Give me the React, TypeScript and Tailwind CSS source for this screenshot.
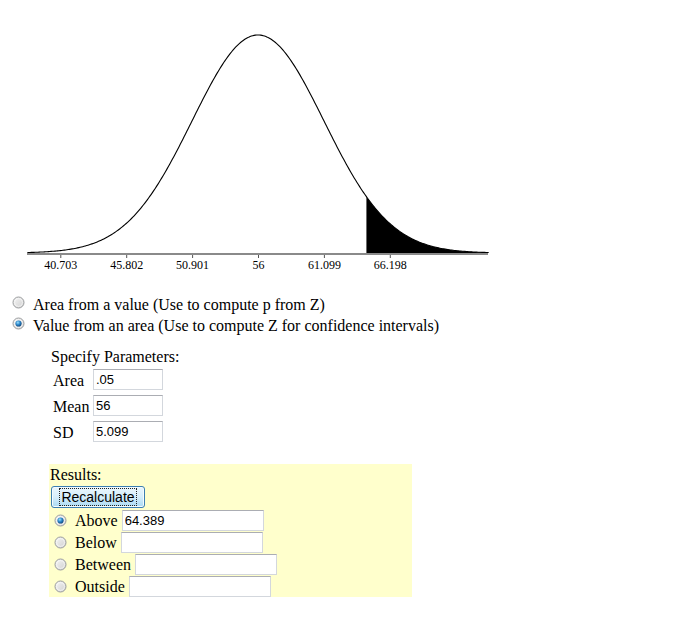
import { useId } from "react";

const MEAN = 56;
const SD = 5.099;
const CX = 258; // x of the mean
const PX = 65.9; // pixels per SD
const BASE = 253;
const PEAK = 218;
const CUTOFF = 64.389;

const xAt = (z: number) => CX + z * PX;
const yAt = (z: number) => BASE - PEAK * Math.exp((-z * z) / 2);

function curvePath(from: number, to: number) {
  const pts: string[] = [];
  for (let z = from; z <= to + 1e-9; z += 0.02) {
    pts.push(`${xAt(z).toFixed(2)},${yAt(z).toFixed(2)}`);
  }
  return pts;
}

function NormalChart() {
  const zc = (CUTOFF - MEAN) / SD;
  const line = curvePath(-3.5, 3.5);
  const tail = curvePath(zc, 3.5);
  const shade = `M${xAt(zc)},${BASE} L${tail.join(" L")} L${xAt(3.5)},${BASE} Z`;
  const ticks = [-3, -2, -1, 0, 1, 2];

  return (
    <svg width={674} height={295} className="block">
      <rect x={27} y={253} width={461} height={2} fill="#8a8a8a" />
      {ticks.map((k) => (
        <line
          key={k}
          x1={xAt(k) + 0.5}
          x2={xAt(k) + 0.5}
          y1={255}
          y2={258}
          stroke="#555"
          strokeWidth={1}
        />
      ))}
      <path d={shade} fill="#000" />
      <polyline points={line.join(" ")} fill="none" stroke="#000" strokeWidth={1.1} />
      {ticks.map((k) => (
        <text
          key={k}
          x={xAt(k) + 0.5}
          y={269}
          textAnchor="middle"
          fontFamily="'Liberation Serif', serif"
          fontSize={12}
          fill="#000"
        >
          {k === 0 ? "56" : (MEAN + k * SD).toFixed(3)}
        </text>
      ))}
    </svg>
  );
}

function Radio({ checked = false }: { checked?: boolean }) {
  const id = useId().replace(/:/g, "");
  return (
    <svg width={13} height={13} viewBox="0 0 13 13" className="block shrink-0">
      <defs>
        <linearGradient id={`ring${id}`} x1="0" y1="0" x2="1" y2="1">
          <stop offset="0" stopColor="#f6f6f6" />
          <stop offset="1" stopColor="#cfcfcf" />
        </linearGradient>
        <radialGradient id={`dot${id}`} cx="0.4" cy="0.35" r="0.7">
          <stop offset="0" stopColor="#9be0ff" />
          <stop offset="0.5" stopColor="#2b86c9" />
          <stop offset="1" stopColor="#0c3f74" />
        </radialGradient>
      </defs>
      <circle cx={6.5} cy={6.5} r={5.5} fill={`url(#ring${id})`} stroke="#9a9c9e" strokeWidth={1} />
      <circle cx={6.5} cy={6.5} r={4} fill="none" stroke="#ffffff" strokeOpacity={0.7} strokeWidth={0.8} />
      {checked && <circle cx={6.5} cy={6.5} r={3.1} fill={`url(#dot${id})`} />}
    </svg>
  );
}

function Field({ value = "", w }: { value?: string; w: string }) {
  return (
    <input
      readOnly
      value={value}
      className={`${w} h-[21px] shrink-0 border border-[#d3d7dd] border-t-[#abadb3] bg-white px-[2px] font-['Liberation_Sans',Arial,sans-serif] text-[13px] text-black outline-none`}
    />
  );
}

const modes = [
  { label: "Area from a value (Use to compute p from Z)", checked: false },
  { label: "Value from an area (Use to compute Z for confidence intervals)", checked: true },
];

const params = [
  { label: "Area", value: ".05" },
  { label: "Mean", value: "56" },
  { label: "SD", value: "5.099" },
];

const results = [
  { label: "Above", value: "64.389", checked: true },
  { label: "Below", value: "", checked: false },
  { label: "Between", value: "", checked: false },
  { label: "Outside", value: "", checked: false },
];

export default function App() {
  return (
    <div className="h-[631px] w-[674px] bg-white font-['Liberation_Serif','Times_New_Roman',serif] text-[16px] text-black">
      <NormalChart />

      <div className="pl-[12px]">
        {modes.map((m) => (
          <div key={m.label} className="flex h-[21px] items-start gap-[8px] leading-[21px]">
            <span className="mt-[1px]">
              <Radio checked={m.checked} />
            </span>
            <span className="-mt-[1px] whitespace-nowrap">{m.label}</span>
          </div>
        ))}
      </div>

      <div className="ml-[51px] mt-[11px]">
        <div className="leading-[18px]">Specify Parameters:</div>
        <div className="mt-[3px] flex flex-col gap-[5px] pl-[2px]">
          {params.map((p) => (
            <div key={p.label} className="flex h-[21px] items-center">
              <span className="w-[40px] pt-[2px] leading-[18px]">{p.label}</span>
              <Field value={p.value} w="w-[70px]" />
            </div>
          ))}
        </div>
      </div>

      <div className="ml-[49px] mt-[22px] h-[133px] w-[363px] bg-[#ffffcc] pl-[1px] pt-[2px]">
        <div className="leading-[18px]">Results:</div>
        <button
          type="button"
          className="ml-[1px] mt-[2px] flex h-[22px] w-[94px] items-center justify-center rounded-[3px] border border-[#3c7fb1] bg-linear-to-b from-[#eaf6fd] via-[#d6eefb] to-[#a9d9f3] shadow-[inset_0_0_0_1px_#f4fbff] font-['Liberation_Sans',Arial,sans-serif] text-[14px] leading-none text-black"
        >
          <span className="border border-dotted border-[#222] px-[1px] py-[1px]">Recalculate</span>
        </button>
        <div className="mt-[1px] flex flex-col">
          {results.map((r) => (
            <div key={r.label} className="flex h-[22px] items-center">
              <span className="ml-[4px]">
                <Radio checked={r.checked} />
              </span>
              <span className="ml-[8px] pt-[1px] leading-[18px]">{r.label}</span>
              <span className="ml-[4px]">
                <Field value={r.value} w="w-[142px]" />
              </span>
            </div>
          ))}
        </div>
      </div>
    </div>
  );
}
